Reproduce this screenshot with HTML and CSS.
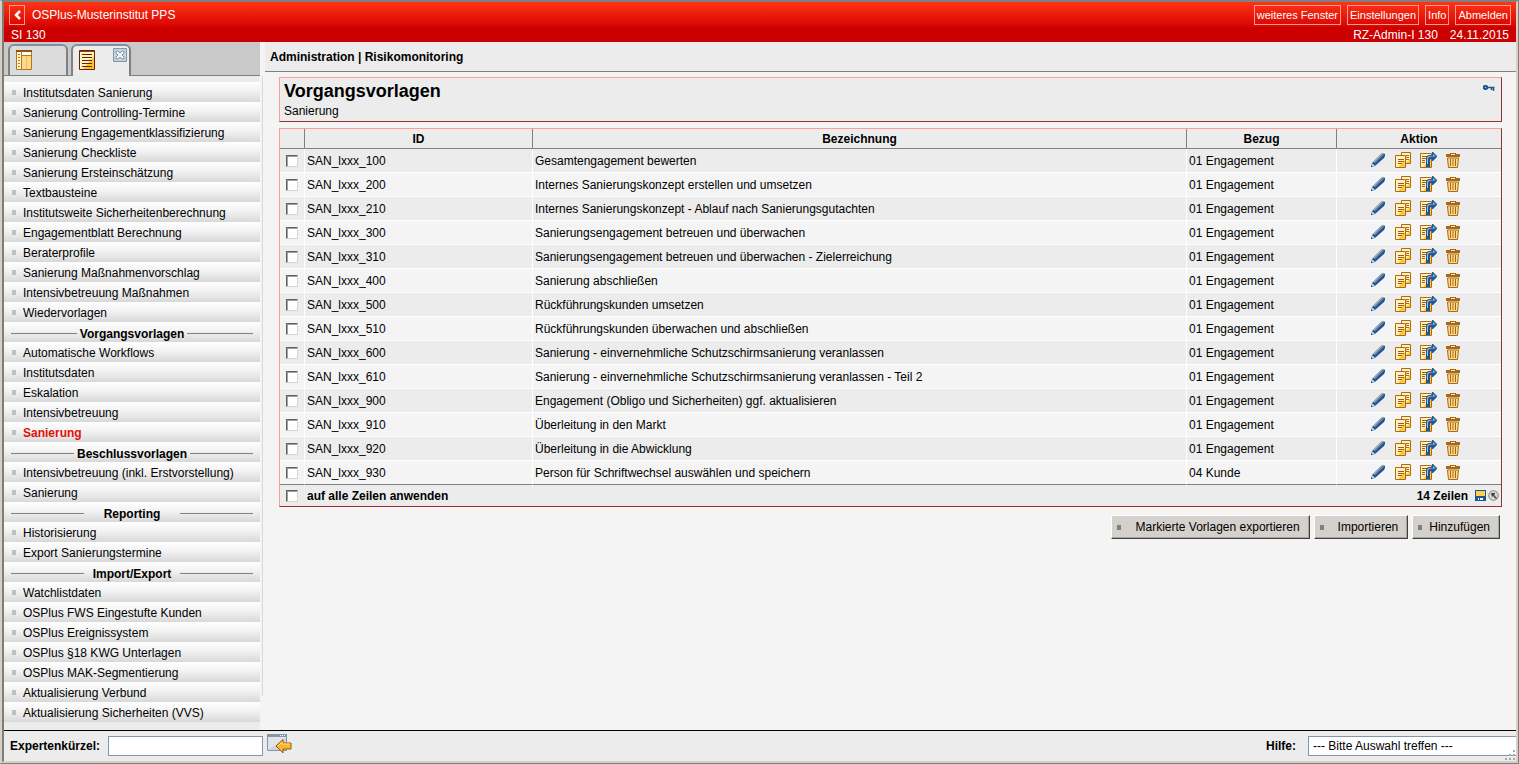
FILE: index.html
```html
<!DOCTYPE html>
<html lang="de">
<head>
<meta charset="utf-8">
<meta name="viewport" content="width=device-width, initial-scale=1.0">
<title>OSPlus - Vorgangsvorlagen</title>
<link rel="stylesheet" href="styles.css">
</head>
<body>
<svg class="sprite" aria-hidden="true">
	<symbol id="i-edit" viewBox="0 0 16 16">
		<path d="M1 15l1-4 9-9 2-1 2 1v2l-1 2-9 8z" fill="#1d5796"/>
		<path d="M3 10l8-8 2-1 1 1-9 9z" fill="#a9adb8"/>
		<path d="M4 11l9-9" stroke="#6f7c92" fill="none"/>
		<path d="M2 11l3 3-4 1z" fill="#c3d7ea"/>
		<path d="M1 13l2 2H1z" fill="#1d5796"/>
	</symbol>
	<symbol id="i-copy" viewBox="0 0 16 16">
		<path d="M6.500 .500h9v11h-9z" fill="#fff0c0" stroke="#b06a10"/>
		<path d="M11 3.500h3M11 5.500h3M11 7.500h3" stroke="#b06a10"/>
		<path d="M11 11l4-4v4z" fill="#ffc636"/>
		<path d="M.500 3.500h10v12H.500z" fill="#fff0c0" stroke="#b06a10"/>
		<path d="M3 15l7-7v7z" fill="#ffc636"/>
		<path d="M3 7.500h6M3 9.500h6M3 11.500h4" stroke="#a05a08"/>
	</symbol>
	<symbol id="i-export" viewBox="0 0 17 16">
		<path d="M.500 1.500h11v14H.500z" fill="#fff0c0" stroke="#b06a10"/>
		<path d="M3 15l8-8v8z" fill="#ffc636"/>
		<path d="M2 4.500h5M2 6.500h4M2 8.500h3M2 10.500h3" stroke="#a05a08"/>
		<path d="M6 15V7q0-4 4-4h2V0h1l4 4v1l-4 4h-1V7h-1q-1 0-1 2v6z" fill="#1d5796"/>
		<path d="M7 12V7q0-3 3-3h3V2l3 2.500H12q-4 0-4 3V12z" fill="#a3b9d0"/>
	</symbol>
	<symbol id="i-trash" viewBox="0 0 14 16">
		<path d="M4 1h6v1h4v3H0V2h4z" fill="#a9670f"/>
		<path d="M5 2h4v1H5z" fill="#ffe7b0"/>
		<path d="M1.500 6h11l-1 9.500h-9z" fill="#ffda8c" stroke="#a9670f"/>
		<path d="M4.500 7v7M7 7v7M9.500 7v7" stroke="#a9670f"/>
	</symbol>
	<symbol id="i-key" viewBox="0 0 12 7">
		<path d="M1 1.500L2 1h1l1 .500v2L3 4H2l-1-.500z" fill="none" stroke="#1d5796" stroke-width="2"/>
		<path d="M5 2.500h6.500M8.500 3v2M10.500 3v3" stroke="#1d5796" stroke-width="1.500"/>
	</symbol>
</svg>

<header class="banner">
	<div class="banner-top">
		<button class="btn-back" type="button" aria-label="Zurück"><svg width="8" height="10" viewBox="0 0 8 10"><path d="M7 1L3 5l4 4" fill="none" stroke="#fff" stroke-width="2.500"/></svg></button>
		<span class="institute">OSPlus-Musterinstitut PPS</span>
		<nav class="banner-nav">
			<a href="#">weiteres Fenster</a>
			<a href="#">Einstellungen</a>
			<a href="#">Info</a>
			<a href="#">Abmelden</a>
		</nav>
	</div>
	<div class="banner-sub">
		<span>SI 130</span>
		<span class="user">RZ-Admin-I 130</span>
		<span>24.11.2015</span>
	</div>
</header>

<div class="wrapper">
	<aside class="sidebar">
		<div class="tabs">
			<button class="tab" type="button" aria-label="Navigation">
				<svg width="16" height="20" viewBox="0 0 16 20"><path d="M.500 .500h15v19H.500z" fill="#ffd98a" stroke="#b9741a"/><path d="M1 1h4v18H1z" fill="#fff3d0"/><path d="M6 2h9v3H6z" fill="#fff"/><path d="M0 1h16" stroke="#8c5210" stroke-width="2"/><path d="M5.500 1v18M5 5.500h10" stroke="#b9741a"/><path d="M10.500 6v13" stroke="#edbd65"/><path d="M2 4.500h2M2 7.500h2M2 10.500h2M2 13.500h2M2 16.500h2" stroke="#b9741a"/></svg>
			</button>
			<div class="tab active">
				<svg width="16" height="20" viewBox="0 0 16 20"><path d="M.500 .500h15v19H.500z" fill="#fff0c4" stroke="#5f2500"/><path d="M4 19L15 6v13z" fill="#ffc02b"/><path d="M3 4.500h10M3 7.500h10M3 10.500h10M3 13.500h10M3 16.500h10" stroke="#5f2500"/><path d="M1 1.500h14" stroke="#8c4a10"/></svg>
				<button class="tab-close" type="button" aria-label="Schließen"><svg width="14" height="14" viewBox="0 0 14 14"><path d="M.500 .500h13v13H.500z" fill="#c8d3dd" stroke="#8295a8"/><path d="M3 3h2l2 2 2-2h2v2L9 7l2 2v2H9L7 9l-2 2H3V9l2-2-2-2z" fill="#eef2f5" stroke="#8295a8"/></svg></button>
			</div>
		</div>
		<nav class="menu">
			<a href="#">Institutsdaten Sanierung</a>
			<a href="#">Sanierung Controlling-Termine</a>
			<a href="#">Sanierung Engagementklassifizierung</a>
			<a href="#">Sanierung Checkliste</a>
			<a href="#">Sanierung Ersteinschätzung</a>
			<a href="#">Textbausteine</a>
			<a href="#">Institutsweite Sicherheitenberechnung</a>
			<a href="#">Engagementblatt Berechnung</a>
			<a href="#">Beraterprofile</a>
			<a href="#">Sanierung Maßnahmenvorschlag</a>
			<a href="#">Intensivbetreuung Maßnahmen</a>
			<a href="#">Wiedervorlagen</a>
			<h2><span>Vorgangsvorlagen</span></h2>
			<a href="#">Automatische Workflows</a>
			<a href="#">Institutsdaten</a>
			<a href="#">Eskalation</a>
			<a href="#">Intensivbetreuung</a>
			<a href="#" class="current">Sanierung</a>
			<h2><span>Beschlussvorlagen</span></h2>
			<a href="#">Intensivbetreuung (inkl. Erstvorstellung)</a>
			<a href="#">Sanierung</a>
			<h2><span>Reporting</span></h2>
			<a href="#">Historisierung</a>
			<a href="#">Export Sanierungstermine</a>
			<h2><span>Import/Export</span></h2>
			<a href="#">Watchlistdaten</a>
			<a href="#">OSPlus FWS Eingestufte Kunden</a>
			<a href="#">OSPlus Ereignissystem</a>
			<a href="#">OSPlus §18 KWG Unterlagen</a>
			<a href="#">OSPlus MAK-Segmentierung</a>
			<a href="#">Aktualisierung Verbund</a>
			<a href="#">Aktualisierung Sicherheiten (VVS)</a>
		</nav>
	</aside>
	<div class="divider"></div>

	<main class="content">
		<div class="breadcrumb">Administration | Risikomonitoring</div>
		<div class="page">
			<section class="title-box">
				<div>
					<h1>Vorgangsvorlagen</h1>
					<p>Sanierung</p>
				</div>
				<svg class="key" width="12" height="7"><use href="#i-key"/></svg>
			</section>

			<table class="grid">
				<colgroup><col class="c-check"><col class="c-id"><col><col class="c-ref"><col class="c-action"></colgroup>
				<thead>
					<tr><th></th><th>ID</th><th>Bezeichnung</th><th>Bezug</th><th>Aktion</th></tr>
				</thead>
				<tbody>
					<tr>
						<td><input type="checkbox" id="v100"></td><td><label for="v100">SAN_lxxx_100</label></td><td>Gesamtengagement bewerten</td><td>01 Engagement</td>
						<td><div class="actions"><button type="button" aria-label="Bearbeiten"><svg><use href="#i-edit"/></svg></button><button type="button" aria-label="Kopieren"><svg><use href="#i-copy"/></svg></button><button type="button" aria-label="Exportieren"><svg><use href="#i-export"/></svg></button><button type="button" aria-label="Löschen"><svg><use href="#i-trash"/></svg></button></div></td>
					</tr>
					<tr>
						<td><input type="checkbox" id="v200"></td><td><label for="v200">SAN_lxxx_200</label></td><td>Internes Sanierungskonzept erstellen und umsetzen</td><td>01 Engagement</td>
						<td><div class="actions"><button type="button" aria-label="Bearbeiten"><svg><use href="#i-edit"/></svg></button><button type="button" aria-label="Kopieren"><svg><use href="#i-copy"/></svg></button><button type="button" aria-label="Exportieren"><svg><use href="#i-export"/></svg></button><button type="button" aria-label="Löschen"><svg><use href="#i-trash"/></svg></button></div></td>
					</tr>
					<tr>
						<td><input type="checkbox" id="v210"></td><td><label for="v210">SAN_lxxx_210</label></td><td>Internes Sanierungskonzept - Ablauf nach Sanierungsgutachten</td><td>01 Engagement</td>
						<td><div class="actions"><button type="button" aria-label="Bearbeiten"><svg><use href="#i-edit"/></svg></button><button type="button" aria-label="Kopieren"><svg><use href="#i-copy"/></svg></button><button type="button" aria-label="Exportieren"><svg><use href="#i-export"/></svg></button><button type="button" aria-label="Löschen"><svg><use href="#i-trash"/></svg></button></div></td>
					</tr>
					<tr>
						<td><input type="checkbox" id="v300"></td><td><label for="v300">SAN_lxxx_300</label></td><td>Sanierungsengagement betreuen und überwachen</td><td>01 Engagement</td>
						<td><div class="actions"><button type="button" aria-label="Bearbeiten"><svg><use href="#i-edit"/></svg></button><button type="button" aria-label="Kopieren"><svg><use href="#i-copy"/></svg></button><button type="button" aria-label="Exportieren"><svg><use href="#i-export"/></svg></button><button type="button" aria-label="Löschen"><svg><use href="#i-trash"/></svg></button></div></td>
					</tr>
					<tr>
						<td><input type="checkbox" id="v310"></td><td><label for="v310">SAN_lxxx_310</label></td><td>Sanierungsengagement betreuen und überwachen - Zielerreichung</td><td>01 Engagement</td>
						<td><div class="actions"><button type="button" aria-label="Bearbeiten"><svg><use href="#i-edit"/></svg></button><button type="button" aria-label="Kopieren"><svg><use href="#i-copy"/></svg></button><button type="button" aria-label="Exportieren"><svg><use href="#i-export"/></svg></button><button type="button" aria-label="Löschen"><svg><use href="#i-trash"/></svg></button></div></td>
					</tr>
					<tr>
						<td><input type="checkbox" id="v400"></td><td><label for="v400">SAN_lxxx_400</label></td><td>Sanierung abschließen</td><td>01 Engagement</td>
						<td><div class="actions"><button type="button" aria-label="Bearbeiten"><svg><use href="#i-edit"/></svg></button><button type="button" aria-label="Kopieren"><svg><use href="#i-copy"/></svg></button><button type="button" aria-label="Exportieren"><svg><use href="#i-export"/></svg></button><button type="button" aria-label="Löschen"><svg><use href="#i-trash"/></svg></button></div></td>
					</tr>
					<tr>
						<td><input type="checkbox" id="v500"></td><td><label for="v500">SAN_lxxx_500</label></td><td>Rückführungskunden umsetzen</td><td>01 Engagement</td>
						<td><div class="actions"><button type="button" aria-label="Bearbeiten"><svg><use href="#i-edit"/></svg></button><button type="button" aria-label="Kopieren"><svg><use href="#i-copy"/></svg></button><button type="button" aria-label="Exportieren"><svg><use href="#i-export"/></svg></button><button type="button" aria-label="Löschen"><svg><use href="#i-trash"/></svg></button></div></td>
					</tr>
					<tr>
						<td><input type="checkbox" id="v510"></td><td><label for="v510">SAN_lxxx_510</label></td><td>Rückführungskunden überwachen und abschließen</td><td>01 Engagement</td>
						<td><div class="actions"><button type="button" aria-label="Bearbeiten"><svg><use href="#i-edit"/></svg></button><button type="button" aria-label="Kopieren"><svg><use href="#i-copy"/></svg></button><button type="button" aria-label="Exportieren"><svg><use href="#i-export"/></svg></button><button type="button" aria-label="Löschen"><svg><use href="#i-trash"/></svg></button></div></td>
					</tr>
					<tr>
						<td><input type="checkbox" id="v600"></td><td><label for="v600">SAN_lxxx_600</label></td><td>Sanierung - einvernehmliche Schutzschirmsanierung veranlassen</td><td>01 Engagement</td>
						<td><div class="actions"><button type="button" aria-label="Bearbeiten"><svg><use href="#i-edit"/></svg></button><button type="button" aria-label="Kopieren"><svg><use href="#i-copy"/></svg></button><button type="button" aria-label="Exportieren"><svg><use href="#i-export"/></svg></button><button type="button" aria-label="Löschen"><svg><use href="#i-trash"/></svg></button></div></td>
					</tr>
					<tr>
						<td><input type="checkbox" id="v610"></td><td><label for="v610">SAN_lxxx_610</label></td><td>Sanierung - einvernehmliche Schutzschirmsanierung veranlassen - Teil 2</td><td>01 Engagement</td>
						<td><div class="actions"><button type="button" aria-label="Bearbeiten"><svg><use href="#i-edit"/></svg></button><button type="button" aria-label="Kopieren"><svg><use href="#i-copy"/></svg></button><button type="button" aria-label="Exportieren"><svg><use href="#i-export"/></svg></button><button type="button" aria-label="Löschen"><svg><use href="#i-trash"/></svg></button></div></td>
					</tr>
					<tr>
						<td><input type="checkbox" id="v900"></td><td><label for="v900">SAN_lxxx_900</label></td><td>Engagement (Obligo und Sicherheiten) ggf. aktualisieren</td><td>01 Engagement</td>
						<td><div class="actions"><button type="button" aria-label="Bearbeiten"><svg><use href="#i-edit"/></svg></button><button type="button" aria-label="Kopieren"><svg><use href="#i-copy"/></svg></button><button type="button" aria-label="Exportieren"><svg><use href="#i-export"/></svg></button><button type="button" aria-label="Löschen"><svg><use href="#i-trash"/></svg></button></div></td>
					</tr>
					<tr>
						<td><input type="checkbox" id="v910"></td><td><label for="v910">SAN_lxxx_910</label></td><td>Überleitung in den Markt</td><td>01 Engagement</td>
						<td><div class="actions"><button type="button" aria-label="Bearbeiten"><svg><use href="#i-edit"/></svg></button><button type="button" aria-label="Kopieren"><svg><use href="#i-copy"/></svg></button><button type="button" aria-label="Exportieren"><svg><use href="#i-export"/></svg></button><button type="button" aria-label="Löschen"><svg><use href="#i-trash"/></svg></button></div></td>
					</tr>
					<tr>
						<td><input type="checkbox" id="v920"></td><td><label for="v920">SAN_lxxx_920</label></td><td>Überleitung in die Abwicklung</td><td>01 Engagement</td>
						<td><div class="actions"><button type="button" aria-label="Bearbeiten"><svg><use href="#i-edit"/></svg></button><button type="button" aria-label="Kopieren"><svg><use href="#i-copy"/></svg></button><button type="button" aria-label="Exportieren"><svg><use href="#i-export"/></svg></button><button type="button" aria-label="Löschen"><svg><use href="#i-trash"/></svg></button></div></td>
					</tr>
					<tr>
						<td><input type="checkbox" id="v930"></td><td><label for="v930">SAN_lxxx_930</label></td><td>Person für Schriftwechsel auswählen und speichern</td><td>04 Kunde</td>
						<td><div class="actions"><button type="button" aria-label="Bearbeiten"><svg><use href="#i-edit"/></svg></button><button type="button" aria-label="Kopieren"><svg><use href="#i-copy"/></svg></button><button type="button" aria-label="Exportieren"><svg><use href="#i-export"/></svg></button><button type="button" aria-label="Löschen"><svg><use href="#i-trash"/></svg></button></div></td>
					</tr>
				</tbody>
				<tfoot>
					<tr>
						<td><input type="checkbox" id="all"></td>
						<td colspan="3"><label for="all">auf alle Zeilen anwenden</label></td>
						<td>
							<div class="summary">
								<span>14 Zeilen</span>
								<svg width="11" height="11" viewBox="0 0 11 11"><path d="M0 0h11v11H0z" fill="#1d5796"/><path d="M1 1h9v5H1z" fill="#ffcf4a"/><path d="M3 8h5v2H3z" fill="#fff"/><path d="M4 8h1v2H4z" fill="#1d5796"/></svg>
								<svg width="11" height="11" viewBox="0 0 11 11"><circle cx="5.500" cy="5.500" r="4.800" fill="#d5d5d5" stroke="#888"/><path d="M3 3h4v1L6 5l3 3-1 1-3-3-1 1z" fill="#444"/></svg>
							</div>
						</td>
					</tr>
				</tfoot>
			</table>

			<div class="buttons">
				<button type="button" class="btn wide">Markierte Vorlagen exportieren</button>
				<button type="button" class="btn wide">Importieren</button>
				<button type="button" class="btn">Hinzufügen</button>
			</div>
		</div>
	</main>
</div>

<footer class="footer">
	<label for="expert">Expertenkürzel:</label>
	<input type="text" id="expert">
	<button class="btn-go" type="button" aria-label="Aufrufen"><svg width="25" height="20" viewBox="0 0 25 20"><path d="M.500 .500h19v16H.500z" fill="#e2e5e8" stroke="#8497aa"/><path d="M0 0h20v3H0z" fill="#8497aa"/><path d="M13 1h1v1h-1zM15 1h1v1h-1zM17 1h1v1h-1z" fill="#fff"/><path d="M1 16L19 4v12z" fill="#d0d4d8"/><path d="M9 12l7-6.500V9h8v6h-8v4z" fill="#ffb52e" stroke="#9c560a"/><path d="M11 12l4-4v2h8" fill="none" stroke="#ffe08a"/></svg></button>
	<label for="help" class="help-label">Hilfe:</label>
	<select id="help"><option>--- Bitte Auswahl treffen ---</option></select>
	<svg class="grip" width="12" height="12" viewBox="0 0 12 12"><path d="M9 1h2v2H9zM5 5h2v2H5zM9 5h2v2H9zM1 9h2v2H1zM5 9h2v2H5zM9 9h2v2H9z" fill="#a5abb5"/></svg>
</footer>
</body>
</html>
```
FILE: styles.css
```css
* {
	box-sizing: border-box;
}

body {
	display: flex;
	flex-direction: column;
	min-height: 100vh;
	margin: 0;
	border: 2px solid #d4d0c8;
	border-width: 2px 3px 3px 4px;
	border-top-color: #808080;
	border-style: solid ridge ridge ridge;
	background-color: #f4f4f4;
	color: #000;
	font-family: "Liberation Sans", Arial, sans-serif;
	font-size: 12px;
	line-height: 14px;
}

a {
	color: inherit;
	text-decoration: none;
}

button,
input,
select {
	font: inherit;
	color: inherit;
	margin: 0;
}

svg {
	display: block;
}

.sprite {
	position: absolute;
	width: 0;
	height: 0;
}

/* banner */
.banner {
	color: #fff;
}

.banner-top {
	display: flex;
	align-items: center;
	height: 25px;
	padding: 0 5px;
	background: linear-gradient(#ff3414, #d60404);
}

.banner-nav {
	display: flex;
	gap: 6px;
	margin-left: auto;
	font-size: 11px;
}

.banner-nav a {
	padding: 2px;
	border: 1px solid #ff9c90;
}

.btn-back {
	display: flex;
	align-items: center;
	justify-content: center;
	width: 16px;
	height: 20px;
	padding: 0;
	border: 1px solid #ff9c90;
	background: none;
}

.institute {
	margin-left: 7px;
}

.banner-sub {
	display: flex;
	gap: 12px;
	height: 15px;
	padding: 1px 7px 0;
	background-color: #c00;
}

.user {
	margin-left: auto;
}

/* sidebar */
.wrapper {
	display: flex;
	flex: 1;
}

.sidebar {
	width: 256px;
	flex: none;
	background-color: #ececec;
}

.tabs {
	display: flex;
	gap: 3px;
	height: 34px;
	padding: 2px 4px 0;
	background-color: #c9c9c9;
	border-bottom: 1px solid #808080;
}

.tab {
	display: flex;
	align-items: flex-start;
	justify-content: space-between;
	width: 60px;
	height: 31px;
	padding: 4px 2px 0 6px;
	border: 2px solid #808080;
	border-top-color: #8090a0;
	border-bottom: 0;
	border-radius: 6px 6px 0 0;
	background-color: #dcdcdc;
}

.tab.active {
	height: 32px;
	background-color: #ececec;
}

.tab-close {
	padding: 0;
	border: 0;
	margin-top: -2px;
	background: none;
}

.menu {
	padding: 6px 0 8px;
}

.menu a {
	display: flex;
	align-items: center;
	gap: 7px;
	height: 20px;
	padding: 1px 8px 0;
	background: linear-gradient(#fff, #f0f0f0 50%, #d8d8d8);
}

.menu a::before {
	content: "";
	width: 4px;
	height: 5px;
	background-color: #c0c0c0;
}

.menu .current {
	color: #e2100a;
	font-weight: bold;
}

.menu h2 {
	display: flex;
	align-items: center;
	height: 20px;
	margin: 0;
	padding: 3px 7px 0;
	background: linear-gradient(#fff, #f0f0f0 50%, #d8d8d8);
	font-size: 12px;
}

.menu h2::before,
.menu h2::after {
	content: "";
	flex: 1;
	height: 1px;
	background-color: #808080;
}

.menu h2 span {
	min-width: 96px;
	padding: 0 3px;
	text-align: center;
}

.divider {
	width: 3px;
	margin: 34px 2px 34px 0;
	border-right: 1px solid #d8d8d8;
}

/* content */
.content {
	flex: 1;
	min-width: 0;
}

.breadcrumb {
	height: 30px;
	padding: 8px 5px;
	border-bottom: 1px solid #808080;
	background-color: #ececec;
	font-weight: bold;
}

.page {
	padding: 5px 14px;
}

.title-box {
	display: flex;
	justify-content: space-between;
	height: 45px;
	padding: 3px 6px 0 4px;
	border: 1px solid;
	border-color: #ff9c9c #993333 #993333 #ff9c9c;
	background-color: #ececec;
}

.title-box h1 {
	margin: 0;
	font-size: 18px;
	line-height: 20px;
}

.title-box p {
	margin: 3px 0 0;
}

.key {
	margin-top: 4px;
}

.grid {
	width: 100%;
	margin-top: 6px;
	border: 1px solid;
	border-color: #ff9c9c #993333 #993333 #ff9c9c;
	border-spacing: 0;
	table-layout: fixed;
}

.c-check {
	width: 25px;
}

.c-id {
	width: 228px;
}

.c-ref {
	width: 150px;
}

.c-action {
	width: 164px;
}

.grid th,
.grid td {
	height: 24px;
	padding: 0 2px;
}

.grid th {
	height: 20px;
	border-right: 1px solid #808080;
	border-bottom: 1px solid #808080;
	background-color: #ececec;
}

.grid th:last-child,
.grid td:last-child {
	border-right: 0;
}

.grid tbody td {
	border-right: 1px solid #fff;
	border-bottom: 1px solid #fff;
}

.grid tbody tr:nth-child(odd) {
	background-color: #ececec;
}

.grid tbody tr:last-child td {
	border-bottom-color: #808080;
}

.grid td:first-child {
	padding-left: 6px;
}

.grid tfoot td {
	height: 21px;
	background-color: #ececec;
	font-weight: bold;
}

input[type="checkbox"] {
	display: block;
	appearance: none;
	width: 12px;
	height: 12px;
	border: 1px solid;
	border-color: #606060 #d8d4cc #d8d4cc #606060;
	background-color: #fff;
	box-shadow: inset 1px 1px #a0a0a0;
}

.actions {
	display: flex;
	justify-content: center;
	gap: 9px;
	padding: 0 8px 2px 0;
}

.actions button {
	padding: 0;
	border: 0;
	background: none;
}

.actions svg {
	width: 16px;
	height: 16px;
}

.actions button:nth-child(3) svg {
	width: 17px;
}

.actions button:nth-child(4) svg {
	width: 14px;
}

.summary {
	display: flex;
	align-items: center;
	justify-content: flex-end;
	gap: 2px;
}

.summary span {
	margin-right: 5px;
}

.buttons {
	display: flex;
	justify-content: flex-end;
	gap: 4px;
	padding: 8px 2px;
}

.btn {
	display: flex;
	align-items: center;
	gap: 7px;
	height: 24px;
	padding: 0 9px 0 5px;
	border: 1px solid;
	border-color: #fff #404040 #404040 #fff;
	background-color: #d4d0cc;
	box-shadow: inset -1px -1px #a8a4a0;
}

.btn.wide {
	gap: 14px;
}

.btn::before {
	content: "";
	width: 4px;
	height: 5px;
	background-color: #808080;
}

/* footer */
.footer {
	position: relative;
	display: flex;
	align-items: center;
	height: 31px;
	padding-left: 6px;
	border-top: 1px solid #000;
	background-color: #ececec;
	font-weight: bold;
}

.footer input,
.footer select {
	height: 20px;
	border: 1px solid #8497aa;
	border-radius: 0;
	background-color: #fff;
	font-weight: normal;
}

.footer input {
	width: 155px;
	margin-left: 8px;
}

.footer select {
	appearance: none;
	width: 208px;
	padding: 0 4px;
	margin-left: 12px;
	border-right: 0;
}

.btn-go {
	padding: 0;
	margin: 0 0 4px 4px;
	border: 0;
	background: none;
}

.help-label {
	margin-left: auto;
}

/* resize handle lies over the select */
.grip {
	position: absolute;
	right: 0;
	bottom: 0;
}
```
